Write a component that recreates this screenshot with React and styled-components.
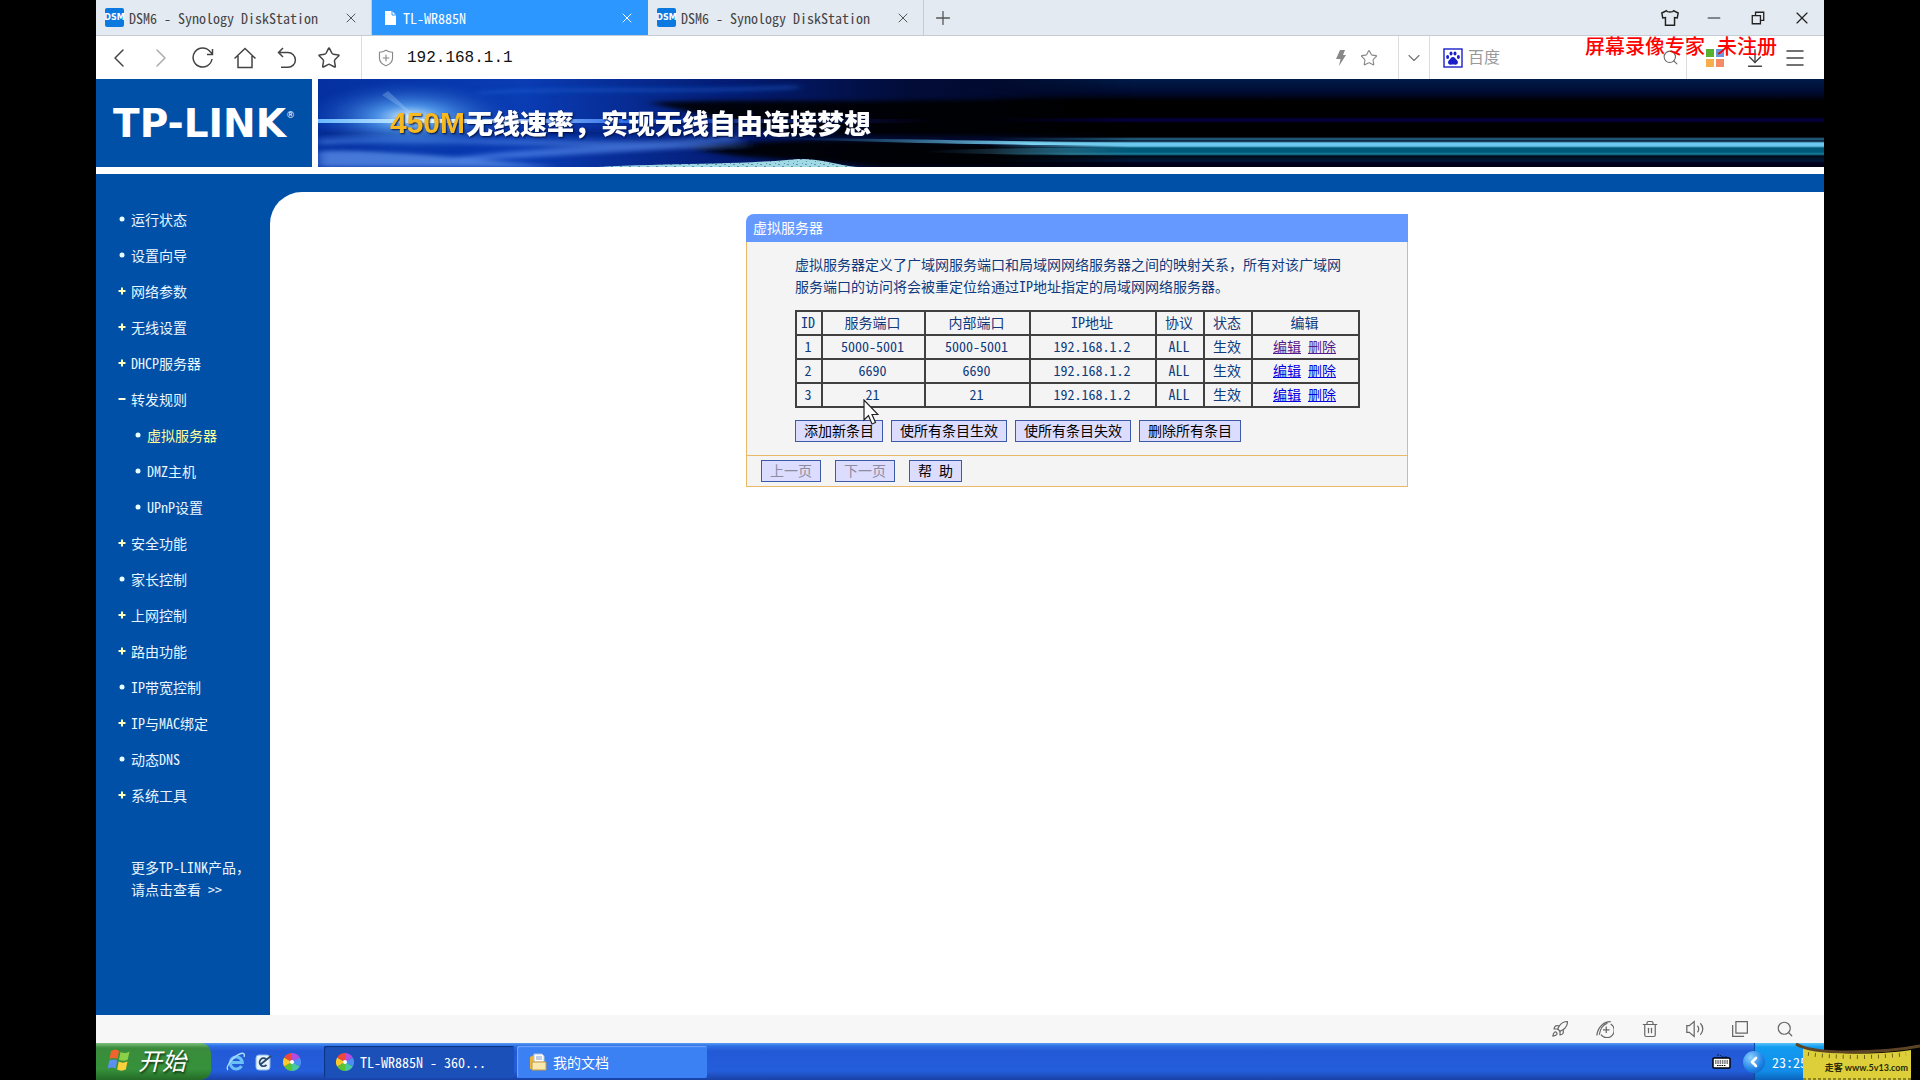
import styled, { createGlobalStyle, css } from 'styled-components';
import {
  ArrowDownToLine,
  ChevronDown,
  ChevronLeft,
  ChevronRight,
  Menu,
  Minus,
  Plus,
  Rocket,
  Search,
  Star,
  Trash2,
  X,
} from 'lucide-react';

const GlobalStyle = createGlobalStyle`
  * {
    box-sizing: border-box;
  }

  body {
    margin: 0;
    background: #000;
    font-family: 'Noto Sans Mono CJK SC', 'Noto Sans CJK SC', 'Liberation Mono', monospace;
    font-size: 14px;
  }

  button,
  input {
    font: inherit;
    color: inherit;
    margin: 0;
    padding: 0;
    border: 0;
    background: none;
  }
`;

const Desktop = styled.div`
  position: relative;
  display: flex;
  flex-direction: column;
  min-height: 100vh;
  padding: 0 5%;
  overflow: hidden;
`;

/* Browser chrome */

const TabStrip = styled.header`
  display: flex;
  height: 36px;
  background: #e4eaf2;
  border-bottom: 1px solid #c4ccd6;
`;

const Tab = styled.div`
  display: flex;
  align-items: center;
  width: 276px;
  padding: 0 12px 0 9px;
  color: ${({ $active }) => ($active ? '#fff' : '#444')};
  background: ${({ $active }) => ($active ? '#2b97ff' : 'transparent')};
  border-right: 1px solid ${({ $active }) => ($active ? '#2b97ff' : '#c4ccd6')};
`;

const TabTitle = styled.button`
  display: flex;
  flex: 1;
  align-items: center;
  gap: 5px;
  white-space: pre;
`;

const IconButton = styled.button`
  display: flex;
  align-items: center;
  justify-content: center;
  flex: none;
  width: ${({ $width }) => $width || 42}px;
  color: ${({ $color }) => $color || '#444'};
`;

const DsmBadge = styled.span`
  display: flex;
  align-items: center;
  justify-content: center;
  width: 19px;
  height: 19px;
  border-radius: 2px;
  background: #0a7ae0;
  color: #fff;
  font: bold 8px 'DejaVu Sans', sans-serif;
`;

const WindowControls = styled.div`
  display: flex;
  margin-left: auto;
`;

const Toolbar = styled.div`
  display: flex;
  height: 43px;
  background: #fff;
`;

const ToolGroup = styled.div`
  display: flex;
  align-items: center;
  padding: ${({ $pad }) => $pad || '0'};
  border-left: ${({ $line }) => ($line ? '1px solid #dcdcdc' : '0')};
`;

const AddressBar = styled(ToolGroup)`
  flex: 1;
  gap: 12px;

  input {
    flex: 1;
    min-width: 0;
    color: #111;
    font: 16px 'Liberation Mono', monospace;
    outline: none;
  }
`;

const SearchBox = styled(ToolGroup)`
  width: 257px;
  gap: 5px;

  input {
    flex: 1;
    min-width: 0;
    padding-bottom: 4px;
    font-size: 16px;
    outline: none;
  }

  input::placeholder {
    color: #999;
    opacity: 1;
  }
`;

const RecorderMark = styled.div`
  position: absolute;
  top: 33px;
  right: calc(5% + 47px);
  display: flex;
  gap: 12px;
  color: #f00;
  font-family: 'Noto Sans CJK SC', sans-serif;
  font-size: 20px;
  font-weight: 500;
  line-height: 26px;
`;

/* Router page */

const Page = styled.div`
  display: flex;
  flex: 1;
  flex-direction: column;
  background: #fff;
`;

const Masthead = styled.div`
  display: flex;
  gap: 6px;
  height: 88px;
`;

const Logo = styled.div`
  display: flex;
  align-items: center;
  justify-content: center;
  width: 216px;
  background: #0050a8;
  color: #fff;
  font: bold 39px 'DejaVu Sans', sans-serif;

  sup {
    align-self: flex-start;
    margin-top: 31px;
    font-size: 9px;
    font-weight: normal;
  }
`;

const Banner = styled.div`
  position: relative;
  display: flex;
  flex: 1;
  align-items: center;
  overflow: hidden;
  padding-left: 72px;
  background: linear-gradient(
    #001c4a 0,
    #000a30 14px,
    #000 22px,
    #000 38px,
    #06004a 41px,
    #000 44px,
    #000 58px,
    #2a6f92 60px,
    #00142c 62px,
    #6cc8ee 64px,
    #6cc8ee 67px,
    #005878 69px,
    #005878 73px,
    #1a80a0 75px,
    #000a18 77px,
    #001838 82px,
    #000018 84px
  );
`;

const BannerArt = styled.svg`
  position: absolute;
  top: 0;
  left: 0;
`;

const Slogan = styled.h1`
  position: relative;
  display: flex;
  align-items: center;
  gap: 1px;
  margin: 0;
  color: #fff;
  font: 900 27px/40px 'Noto Sans CJK SC', sans-serif;
  text-shadow: 1px 1px 2px #001040;

  em {
    color: #f8b820;
    font: bold 30px 'Liberation Sans', sans-serif;
  }
`;

const Band = styled.div`
  height: 18px;
  margin-top: 7px;
  background: #0050a8;
`;

const Columns = styled.div`
  display: flex;
  flex: 1;
  background: #0050a8;
`;

const Sidebar = styled.nav`
  width: 174px;
  padding-top: 10px;
  color: #e8f6ff;
`;

const NavList = styled.ul`
  margin: 0;
  padding: 0;
  list-style: none;
`;

const NavItem = styled.li`
  padding-left: ${({ $sub }) => ($sub ? 38 : 22)}px;

  a {
    display: flex;
    align-items: center;
    gap: 5px;
    height: 36px;
    padding-bottom: 2px;
    color: ${({ $current }) => ($current ? '#ffff99' : 'inherit')};
    text-decoration: none;
  }
`;

const MoreLink = styled.a`
  display: block;
  margin-top: 42px;
  padding-left: 35px;
  color: inherit;
  line-height: 22px;
  text-decoration: none;
`;

const Content = styled.main`
  display: flex;
  flex: 1;
  align-items: flex-start;
  justify-content: center;
  padding: 22px 0 22px 60px;
  border-top-left-radius: 32px;
  background: #fff;
`;

const Panel = styled.section`
  position: relative;
  width: 662px;
  border-radius: 8px 0 0 0;
  background: #f4f4f4;
  color: #103a7c;
`;

const PanelTitle = styled.h2`
  margin: 0;
  padding: 0 0 2px 7px;
  border-radius: 8px 0 0 0;
  background: #6699ff;
  color: #fff;
  font-size: 14px;
  font-weight: normal;
  line-height: 26px;
`;

const PanelBody = styled.div`
  padding: 11px 48px 13px;
  border: solid #e9b868;
  border-width: 0 1px;

  p {
    margin: 0;
    line-height: 22px;
    white-space: nowrap;
  }
`;

const RuleTable = styled.table`
  width: 563px;
  margin: 13px 0 12px;
  border-collapse: collapse;
  table-layout: fixed;
  text-align: center;

  th,
  td {
    height: 24px;
    padding: 0 2px 2px 0;
    border: 2px solid #404040;
    font-weight: normal;
    line-height: 20px;
  }
`;

const RuleLink = styled.a`
  color: ${({ $visited }) => ($visited ? '#551a8b' : '#0000e0')};

  & + & {
    margin-left: 7px;
  }
`;

const ButtonRow = styled.div`
  display: flex;
  gap: ${({ $gap }) => $gap}px;
`;

const PanelButton = styled.button`
  height: 22px;
  padding: 0 8px 2px;
  border: 1px solid #3c5aa8;
  background: #dcdcff;
  color: #000;
  line-height: 18px;
  white-space: pre;

  &:disabled {
    color: #8c8ca0;
  }
`;

const PanelFooter = styled.div`
  padding: 4px 14px;
  border: 1px solid #e9b868;
`;

const Pointer = styled.svg`
  position: absolute;
  top: 185px;
  left: 117px;
`;

/* Bottom bars */

const StatusBar = styled.div`
  display: flex;
  justify-content: flex-end;
  height: 28px;
  padding-right: 17px;
  background: #f7f7f7;
`;

const xpBlue = css`
  background: linear-gradient(#5a9cf4 0, #2f6fe4 3px, #2359d6 8px, #245edb 28px, #1941a5 37px);
`;

const Taskbar = styled.footer`
  display: flex;
  height: 37px;
  color: #fff;
  ${xpBlue}
`;

const StartButton = styled.button`
  display: flex;
  align-items: center;
  gap: 6px;
  width: 115px;
  padding: 0 0 4px 11px;
  border-radius: 0 10px 10px 0;
  background: linear-gradient(#7cc07c 0, #3a8c3c 5px, #36923a 26px, #246a28 37px);
  color: #fff;
  font-size: 24px;
  font-style: italic;
  line-height: 32px;
  text-shadow: 1px 2px 2px #163c18;
`;

const QuickLaunch = styled.div`
  display: flex;
  align-items: center;
  width: 113px;
  padding-left: 11px;
`;

const Task = styled.button`
  display: flex;
  align-items: center;
  gap: 6px;
  width: 190px;
  height: 32px;
  margin: 3px 3px 0 0;
  padding-left: 12px;
  border-radius: 2px;
  background: ${({ $active }) => ($active ? '#1a50b8' : '#3c81f3')};
  box-shadow: inset 1px 1px 1px ${({ $active }) => ($active ? '#0c3480' : '#74a8ff')};
  text-align: left;
  white-space: pre;
`;

const Tray = styled.div`
  position: relative;
  display: flex;
  align-items: center;
  width: 70px;
  padding-left: 17px;
  background: linear-gradient(#5cc4fa 0, #129cf0 4px, #128ce8 28px, #0a64bc 37px);
  border-left: 1px solid #0a4a9c;
`;

const TrayArrow = styled.button`
  position: absolute;
  top: 8px;
  left: -12px;
  display: flex;
  align-items: center;
  justify-content: center;
  width: 22px;
  height: 22px;
  border-radius: 50%;
  background: radial-gradient(circle at 35% 30%, #8cd0ff, #1b7fe4 60%, #0c5ab4);
`;

const TaskbarEnd = styled.div`
  display: flex;
  gap: 23px;
  margin-left: auto;
`;

const SiteMark = styled.div`
  position: absolute;
  right: 0;
  bottom: 0;
  width: 126px;
  height: 38px;

  svg {
    position: absolute;
    inset: 0;
  }

  span {
    position: absolute;
    right: 12px;
    bottom: 3px;
    color: #2c2a06;
    font: bold 9px/18px Lato, 'Noto Sans CJK SC', sans-serif;
    white-space: nowrap;
  }
`;

/* Drawings */

const Line = ({ size = 22, width = 1.5, children }) => (
  <svg
    width={size}
    height={size}
    viewBox="0 0 22 22"
    fill="none"
    stroke="currentColor"
    strokeWidth={width}
    aria-hidden="true"
  >
    {children}
  </svg>
);

const PageIcon = () => (
  <svg width="17" height="16" viewBox="0 0 17 16" aria-hidden="true">
    <path d="M4 1h7l4 4v10H4z" fill="#fff" />
    <path d="M11 1v4h4" fill="none" stroke="#2b97ff" />
  </svg>
);

const PawIcon = () => (
  <svg width="20" height="20" viewBox="0 0 20 20" fill="#1a1fc8" aria-hidden="true">
    <rect x="1" y="1" width="18" height="18" fill="#fff" stroke="#1a1fc8" strokeWidth="1.4" />
    <ellipse cx="4.6" cy="9" rx="1.5" ry="2" />
    <ellipse cx="8" cy="5.4" rx="1.5" ry="2" />
    <ellipse cx="12" cy="5.4" rx="1.5" ry="2" />
    <ellipse cx="15.4" cy="9" rx="1.5" ry="2" />
    <path d="M10 9c2 0 2.600 2 4 3.300 2 2 .6 4.700-1.600 4.400-1.600-.3-3.200-.3-4.800 0-2.200.3-3.600-2.400-1.600-4.400C7.400 11 8 9 10 9z" />
  </svg>
);

const AppsIcon = () => (
  <svg width="18" height="18" viewBox="0 0 18 18" aria-hidden="true">
    <path d="M0 0h8v8H0z" fill="#58b030" />
    <path d="M10 0h8v8h-8z" fill="#6a94dc" />
    <path d="M0 10h8v8H0z" fill="#f6ae4c" />
    <path d="M10 10h8v8h-8z" fill="#f48a66" />
  </svg>
);

const FlagIcon = () => (
  <svg width="25" height="24" viewBox="0 0 25 24" aria-hidden="true">
    <path d="M4 3c3-2 6-1.500 8 0l-1.500 8c-2.500-1.500-5-1.500-8 0z" fill="#f0642c" />
    <path d="M13.500 4c2.500 1.500 5.500 1.500 9-.5l-1.700 8c-3 1.800-6 1.600-8.800.2z" fill="#8cd048" />
    <path d="M2.200 12.500c3-1.500 5.500-1.500 8 0L8.700 20.500c-2.500-1.500-5-1.500-8 0z" fill="#5c90f0" />
    <path d="M11.700 13.500c2.800 1.500 5.500 1.500 8.800 0l-1.700 8c-3 1.500-6 1.500-8.700 0z" fill="#fcd03c" />
  </svg>
);

const IeIcon = () => (
  <svg width="20" height="20" viewBox="0 0 20 20" fill="none" aria-hidden="true">
    <path d="M15.500 14a6 6 0 1 1 .8-3.500H6" stroke="#6cc0f8" strokeWidth="3" />
    <path d="M2 18C-1 15 7 4 15 1.500c3-.8 4 1 3 3.500" stroke="#a8dcfc" strokeWidth="1.400" />
  </svg>
);

const ShowDesktopIcon = () => (
  <svg width="20" height="20" viewBox="0 0 20 20" aria-hidden="true">
    <rect x="2" y="3" width="14" height="15" rx="3" fill="#e8f2fc" stroke="#8cb8e8" />
    <path d="M12 7a4 4 0 1 0 .5 6M7 12l10-8" fill="none" stroke="#28486c" strokeWidth="1.800" />
  </svg>
);

const PinwheelIcon = () => (
  <svg width="18" height="18" viewBox="0 0 18 18" aria-hidden="true">
    <path d="M9 9V0a9 9 0 0 1 7.800 4.500z" fill="#b44ce0" />
    <path d="M9 9l7.800-4.500a9 9 0 0 1 0 9z" fill="#4c8cf4" />
    <path d="M9 9l7.800 4.500A9 9 0 0 1 9 18z" fill="#48c8a0" />
    <path d="M9 9v9a9 9 0 0 1-7.800-4.500z" fill="#5cc430" />
    <path d="M9 9l-7.800 4.500a9 9 0 0 1 0-9z" fill="#fcc828" />
    <path d="M9 9L1.200 4.500A9 9 0 0 1 9 0z" fill="#f04838" />
    <circle cx="9" cy="9" r="2" fill="#fff" />
  </svg>
);

const FolderIcon = () => (
  <svg width="18" height="18" viewBox="0 0 18 18" aria-hidden="true">
    <path d="M1 4l4-2v14H1z" fill="#e8b43c" />
    <path d="M5 1h8l2 2v6H5z" fill="#fff" stroke="#b8c4d8" />
    <path d="M3 9h14v8H3z" fill="#f8e8b0" stroke="#c89c3c" />
    <path d="M7 4h6M7 6h6" stroke="#7c9cd0" />
  </svg>
);

const KeyboardIcon = () => (
  <svg width="19" height="15" viewBox="0 0 19 15" aria-hidden="true">
    <path d="M5 1h3l2 2h5" fill="none" stroke="#081c4c" strokeDasharray="2 1" />
    <rect x="1" y="4" width="17" height="10" rx="1" fill="#fff" stroke="#000" strokeWidth="1.500" />
    <path d="M3 7h13M3 9h13M5 11.500h9" stroke="#000" strokeDasharray="1.500 .8" />
  </svg>
);

const Bullet = ({ kind }) => (
  <svg width="8" height="8" viewBox="0 0 8 8" aria-hidden="true">
    {kind === 'dot' && <circle cx="4" cy="4" r="2.500" fill="#eaffff" />}
    {kind === 'plus' && <path d="M4 .5v7M.5 4h7" stroke="#ffffc0" strokeWidth="2" />}
    {kind === 'minus' && <path d="M.5 4h7" stroke="#ffffe0" strokeWidth="2" />}
  </svg>
);

const BannerScene = () => (
  <BannerArt width="820" height="88" viewBox="0 0 820 88" aria-hidden="true">
    <defs>
      <linearGradient id="sky" x1="0" x2="1" y1="0" y2="0">
        <stop offset="0" stopColor="#0430a0" />
        <stop offset=".25" stopColor="#0a3cb4" />
        <stop offset=".5" stopColor="#041c74" />
        <stop offset=".72" stopColor="#020c38" />
        <stop offset="1" stopColor="#000820" />
      </linearGradient>
      <linearGradient id="fade" x1="0" x2="1" y1="0" y2="0">
        <stop offset=".82" stopColor="#fff" />
        <stop offset=".99" stopColor="#000" />
      </linearGradient>
      <mask id="edge">
        <path d="M0 0h820v88H0z" fill="url(#fade)" />
      </mask>
      <radialGradient id="glow">
        <stop offset="0" stopColor="#e4f6ff" />
        <stop offset=".3" stopColor="#5ca8f4" stopOpacity=".8" />
        <stop offset="1" stopColor="#0a3cb4" stopOpacity="0" />
      </radialGradient>
      <linearGradient id="horizon" x1="0" x2="1" y1="0" y2="0">
        <stop offset="0" stopColor="#68b8ff" />
        <stop offset=".2" stopColor="#e8fcff" />
        <stop offset=".5" stopColor="#2c70ec" />
        <stop offset="1" stopColor="#10108c" stopOpacity="0" />
      </linearGradient>
      <linearGradient id="stream" x1="0" x2="1" y1="0" y2="0">
        <stop offset="0" stopColor="#2c80c0" stopOpacity="0" />
        <stop offset=".7" stopColor="#80d8f4" />
      </linearGradient>
      <filter id="soft" x="-20%" y="-50%" width="140%" height="200%">
        <feGaussianBlur stdDeviation="6 2" />
      </filter>
      <pattern id="shore" width="9" height="7" patternUnits="userSpaceOnUse">
        <path d="M0 0h9v7H0z" fill="#a0d8e4" />
        <path d="M1 1h2v1H1zM5 3h2v1H5zM2 5h1v1H2zM7 0h1v1H7z" fill="#5c94b0" />
      </pattern>
    </defs>
    <g mask="url(#edge)">
      <path d="M0 0h820v88H0z" fill="url(#sky)" />
      <g filter="url(#soft)">
        <path d="M330 24c80-6 240 4 510-10v43H480c-50-6-90-22-150-33z" fill="#000" opacity=".9" />
        <path d="M370 68c120-12 260-6 370 2s80 14 100 18H560c-60-8-140-6-190-20z" fill="#000" opacity=".9" />
        <path d="M0 72c60-2 140 6 240 16H0z" fill="#5c90e8" opacity=".75" />
        <path d="M0 60c140-6 300 10 420-4v6c-160 14-280-4-420 4z" fill="#4c80e0" opacity=".6" />
        <path d="M140 78c90-10 150-14 300-12-100 4-180 10-300 16z" fill="#5c90f0" opacity=".6" />
        <path d="M0 52h300v4H0z" fill="#001c70" opacity=".7" />
        <path d="M160 12c90-6 200 0 320-6v4c-120 6-230 0-320 6z" fill="#1c5cd0" opacity=".5" />
      </g>
      <ellipse cx="92" cy="38" rx="110" ry="38" fill="url(#glow)" />
      <path d="M64 16l34 22-28-26z" fill="#bce4ff" opacity=".25" />
      <path d="M0 40h620v4H0z" fill="url(#horizon)" />
      <path d="M460 59c120 0 220 4 360 4v4c-140-1-240-3-360-7z" fill="url(#stream)" />
      <path d="M600 72c90-4 150-3 220-3v7c-80 0-130 0-220-3z" fill="url(#stream)" opacity=".5" />
      <path d="M280 88c70-4 140-2 200-8 20-1 40 6 60 8z" fill="url(#shore)" />
    </g>
  </BannerArt>
);

const tabs = [
  { title: 'DSM6 - Synology DiskStation' },
  { title: 'TL-WR885N', active: true },
  { title: 'DSM6 - Synology DiskStation' },
];

const menu = [
  { label: '运行状态', kind: 'dot' },
  { label: '设置向导', kind: 'dot' },
  { label: '网络参数', kind: 'plus' },
  { label: '无线设置', kind: 'plus' },
  { label: 'DHCP服务器', kind: 'plus' },
  { label: '转发规则', kind: 'minus' },
  { label: '虚拟服务器', kind: 'dot', sub: true, current: true },
  { label: 'DMZ主机', kind: 'dot', sub: true },
  { label: 'UPnP设置', kind: 'dot', sub: true },
  { label: '安全功能', kind: 'plus' },
  { label: '家长控制', kind: 'dot' },
  { label: '上网控制', kind: 'plus' },
  { label: '路由功能', kind: 'plus' },
  { label: 'IP带宽控制', kind: 'dot' },
  { label: 'IP与MAC绑定', kind: 'plus' },
  { label: '动态DNS', kind: 'dot' },
  { label: '系统工具', kind: 'plus' },
];

const columns = [
  { title: 'ID', width: 26 },
  { title: '服务端口', width: 103 },
  { title: '内部端口', width: 105 },
  { title: 'IP地址', width: 126 },
  { title: '协议', width: 48 },
  { title: '状态', width: 48 },
  { title: '编辑', width: 107 },
];

const rules = [
  { id: 1, port: '5000-5001', ip: '192.168.1.2', visited: true },
  { id: 2, port: '6690', ip: '192.168.1.2' },
  { id: 3, port: '21', ip: '192.168.1.2' },
];

const BrowserTabs = () => (
  <TabStrip>
    {tabs.map(({ title, active }, key) => (
      <Tab key={key} $active={active}>
        <TabTitle type="button">
          {active ? <PageIcon /> : <DsmBadge>DSM</DsmBadge>}
          {title}
        </TabTitle>
        <IconButton type="button" aria-label="关闭标签" $width={16} $color={active ? '#fff' : '#555'}>
          <X size={16} strokeWidth={1.5} />
        </IconButton>
      </Tab>
    ))}
    <IconButton type="button" aria-label="新标签" $width={38} $color="#555">
      <Plus size={22} strokeWidth={1.4} />
    </IconButton>
    <WindowControls>
      <IconButton type="button" aria-label="皮肤" $width={44} $color="#222">
        <Line size={20} width={1.6}>
          <path d="M7 3c1 2 7 2 8 0l5 2.500-1 5.500-3-.5V19H6v-8.500L3 11 2 5.500z" />
        </Line>
      </IconButton>
      <IconButton type="button" aria-label="最小化" $width={44} $color="#222">
        <Minus size={20} strokeWidth={1.4} />
      </IconButton>
      <IconButton type="button" aria-label="还原" $width={44} $color="#222">
        <Line size={18} width={1.6}>
          <path d="M4 8h10v10H4zM8 8V4h10v10h-4" />
        </Line>
      </IconButton>
      <IconButton type="button" aria-label="关闭" $width={44} $color="#222">
        <X size={20} strokeWidth={1.4} />
      </IconButton>
    </WindowControls>
  </TabStrip>
);

const BrowserToolbar = () => (
  <Toolbar>
    <ToolGroup $pad="0 11px 0 2px">
      <IconButton type="button" aria-label="后退">
        <ChevronLeft size={32} strokeWidth={1.1} />
      </IconButton>
      <IconButton type="button" aria-label="前进" $color="#aaa">
        <ChevronRight size={32} strokeWidth={1.1} />
      </IconButton>
      <IconButton type="button" aria-label="刷新">
        <Line>
          <path d="M20 12a9.500 9.500 0 1 1-2-7.500l2.500 2.500M20.500 2v5.500H15" />
        </Line>
      </IconButton>
      <IconButton type="button" aria-label="主页">
        <Line>
          <path d="M.5 11.500L11 1.500l10.500 10M4 9v11.500h14V9" />
        </Line>
      </IconButton>
      <IconButton type="button" aria-label="恢复">
        <Line>
          <path d="M7 1L2.500 5.500 7 10M2.500 5.500H12a7.300 7.300 0 0 1 0 14.800H5" />
        </Line>
      </IconButton>
      <IconButton type="button" aria-label="收藏">
        <Star size={24} strokeWidth={1.5} />
      </IconButton>
    </ToolGroup>
    <AddressBar $line $pad="0 20px 0 15px">
      <IconButton as="span" $width={18} $color="#888">
        <Line size={20} width={1.4}>
          <path d="M11 1.500c3 2 5.500 2.500 8 2.500v7c0 5-4 8-8 9.500C7 19 3 16 3 11V4c2.500 0 5-.5 8-2.500zM11 7v8M7 11h8" />
        </Line>
      </IconButton>
      <input type="text" aria-label="地址" defaultValue="192.168.1.1" />
      <IconButton type="button" aria-label="极速模式" $width={15} $color="#888">
        <svg width="10" height="16" viewBox="0 0 10 16" fill="currentColor" aria-hidden="true">
          <path d="M4 0h5L7 5h3L3 16l1.500-7H0z" />
        </svg>
      </IconButton>
      <IconButton type="button" aria-label="收藏此页" $width={18} $color="#888">
        <Star size={18} strokeWidth={1.5} />
      </IconButton>
    </AddressBar>
    <ToolGroup $line>
      <IconButton type="button" aria-label="展开" $width={30} $color="#777">
        <ChevronDown size={20} strokeWidth={1.4} />
      </IconButton>
    </ToolGroup>
    <SearchBox $line $pad="0 4px 0 13px">
      <PawIcon />
      <input type="search" aria-label="搜索" placeholder="百度" />
      <IconButton type="button" aria-label="开始搜索" $width={24} $color="#666">
        <Search size={17} strokeWidth={1.5} />
      </IconButton>
    </SearchBox>
    <ToolGroup $line $pad="0 9px 0 8px">
      <IconButton type="button" aria-label="扩展" $width={40}>
        <AppsIcon />
      </IconButton>
      <IconButton type="button" aria-label="下载" $width={40}>
        <ArrowDownToLine size={22} strokeWidth={1.5} />
      </IconButton>
      <IconButton type="button" aria-label="菜单" $width={40}>
        <Menu size={24} strokeWidth={1.5} />
      </IconButton>
    </ToolGroup>
  </Toolbar>
);

const VirtualServers = () => (
  <Panel>
    <PanelTitle>虚拟服务器</PanelTitle>
    <PanelBody>
      <p>
        虚拟服务器定义了广域网服务端口和局域网网络服务器之间的映射关系，所有对该广域网
        <br />
        服务端口的访问将会被重定位给通过IP地址指定的局域网网络服务器。
      </p>
      <RuleTable>
        <colgroup>
          {columns.map(({ title, width }) => (
            <col key={title} width={width} />
          ))}
        </colgroup>
        <thead>
          <tr>
            {columns.map(({ title }) => (
              <th key={title}>{title}</th>
            ))}
          </tr>
        </thead>
        <tbody>
          {rules.map(({ id, port, ip, visited }) => (
            <tr key={id}>
              <td>{id}</td>
              <td>{port}</td>
              <td>{port}</td>
              <td>{ip}</td>
              <td>ALL</td>
              <td>生效</td>
              <td>
                <RuleLink href="#edit" $visited={visited}>
                  编辑
                </RuleLink>
                <RuleLink href="#delete" $visited={visited}>
                  删除
                </RuleLink>
              </td>
            </tr>
          ))}
        </tbody>
      </RuleTable>
      <ButtonRow $gap={8}>
        <PanelButton type="button">添加新条目</PanelButton>
        <PanelButton type="button">使所有条目生效</PanelButton>
        <PanelButton type="button">使所有条目失效</PanelButton>
        <PanelButton type="button">删除所有条目</PanelButton>
      </ButtonRow>
    </PanelBody>
    <PanelFooter>
      <ButtonRow $gap={14}>
        <PanelButton type="button" disabled>
          上一页
        </PanelButton>
        <PanelButton type="button" disabled>
          下一页
        </PanelButton>
        <PanelButton type="button">帮 助</PanelButton>
      </ButtonRow>
    </PanelFooter>
    <Pointer width="16" height="26" viewBox="0 0 16 26" aria-hidden="true">
      <path d="M1 1v20l4.500-4.500L9 25l3.500-1.500L9 15.500h6z" fill="#fff" stroke="#222" strokeWidth="1.200" />
    </Pointer>
  </Panel>
);

const BrowserStatus = () => (
  <StatusBar>
    <IconButton type="button" aria-label="加速" $width={45} $color="#666">
      <Rocket size={18} strokeWidth={1.6} />
    </IconButton>
    <IconButton type="button" aria-label="浏览医生" $width={45} $color="#666">
      <Line size={18}>
        <path d="M18 5a9 9 0 1 1-12 13M1 19C2 10 8 2 18 2M4 18C5 12 8 6 14 4M12.500 8v8M8.500 12h8" />
      </Line>
    </IconButton>
    <IconButton type="button" aria-label="清理" $width={45} $color="#666">
      <Trash2 size={18} strokeWidth={1.6} />
    </IconButton>
    <IconButton type="button" aria-label="声音" $width={45} $color="#666">
      <Line size={18}>
        <path d="M1 7v8h3l6 5V2L4 7zM14 7c2 2 2 6 0 8M17.500 4c4 4 4 10 0 14" />
      </Line>
    </IconButton>
    <IconButton type="button" aria-label="分屏" $width={45} $color="#666">
      <Line size={18}>
        <path d="M6 2h14v14H6zM2 6v14h14" />
      </Line>
    </IconButton>
    <IconButton type="button" aria-label="缩放" $width={45} $color="#666">
      <Search size={18} strokeWidth={1.6} />
    </IconButton>
  </StatusBar>
);

const WindowsTaskbar = () => (
  <Taskbar>
    <StartButton type="button">
      <FlagIcon />
      开始
    </StartButton>
    <QuickLaunch>
      <IconButton type="button" aria-label="Internet Explorer" $width={28}>
        <IeIcon />
      </IconButton>
      <IconButton type="button" aria-label="显示桌面" $width={28}>
        <ShowDesktopIcon />
      </IconButton>
      <IconButton type="button" aria-label="360" $width={28}>
        <PinwheelIcon />
      </IconButton>
    </QuickLaunch>
    <Task type="button" $active>
      <PinwheelIcon />
      TL-WR885N - 360...
    </Task>
    <Task type="button">
      <FolderIcon />
      我的文档
    </Task>
    <TaskbarEnd>
      <IconButton type="button" aria-label="输入法" $width={19}>
        <KeyboardIcon />
      </IconButton>
      <Tray>
        <TrayArrow type="button" aria-label="展开通知区">
          <ChevronLeft size={16} strokeWidth={4} color="#fff" />
        </TrayArrow>
        23:25
      </Tray>
    </TaskbarEnd>
  </Taskbar>
);

export default function App() {
  return (
    <>
      <GlobalStyle />
      <Desktop>
        <BrowserTabs />
        <BrowserToolbar />
        <Page>
          <Masthead>
            <Logo>
              TP-LINK<sup>®</sup>
            </Logo>
            <Banner>
              <BannerScene />
              <Slogan>
                <em>450M</em>无线速率，实现无线自由连接梦想
              </Slogan>
            </Banner>
          </Masthead>
          <Band />
          <Columns>
            <Sidebar>
              <NavList>
                {menu.map(({ label, kind, sub, current }) => (
                  <NavItem key={label} $sub={sub} $current={current}>
                    <a href={`#${label}`}>
                      <Bullet kind={kind} />
                      {label}
                    </a>
                  </NavItem>
                ))}
              </NavList>
              <MoreLink href="#more">
                更多TP-LINK产品，
                <br />
                请点击查看 &gt;&gt;
              </MoreLink>
            </Sidebar>
            <Content>
              <VirtualServers />
            </Content>
          </Columns>
        </Page>
        <BrowserStatus />
        <WindowsTaskbar />
        <RecorderMark>
          <span>屏幕录像专家</span>
          <span>未注册</span>
        </RecorderMark>
        <SiteMark>
          <svg width="126" height="38" viewBox="0 0 126 38" aria-hidden="true">
            <path d="M9 6c30 7 78 7 108 2v30H9z" fill="#dccf3a" />
            <path d="M14 12c28 4 70 4 98 0" fill="none" stroke="#6c6414" strokeWidth="4" strokeDasharray="1 6" />
            <path d="M9 37h108" stroke="#3c3808" strokeDasharray="3 2" />
            <path d="M2 2c8 5 24 8 52 8s52-2 72-6" fill="none" stroke="#5c4424" strokeWidth="3" />
          </svg>
          <span>走客 www.5v13.com</span>
        </SiteMark>
      </Desktop>
    </>
  );
}
